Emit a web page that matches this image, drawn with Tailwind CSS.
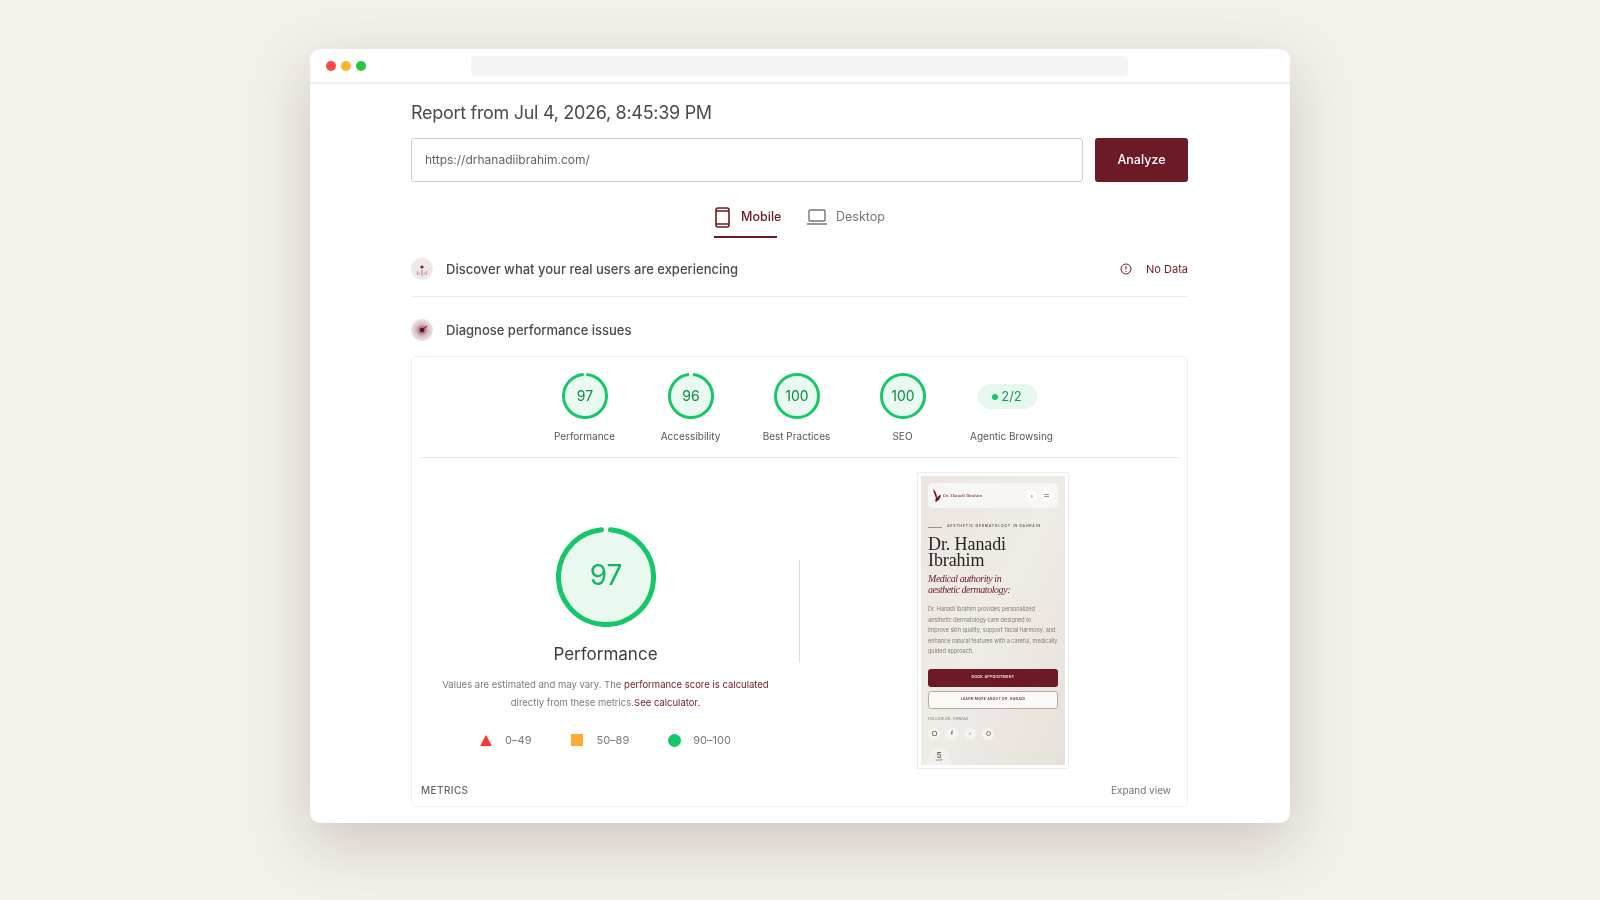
<!DOCTYPE html>
<html lang="en">
<head>
  <meta charset="UTF-8">
  <meta name="viewport" content="width=device-width, initial-scale=1.0">
  <title>PageSpeed Report</title>
  <script src="https://cdn.jsdelivr.net/npm/@tailwindcss/browser@4"></script>
</head>
<body class="bg-[#f4f0eb] font-['Inter',sans-serif] h-[900px] overflow-hidden">
  <div class="w-[980px] h-[774px] mx-auto mt-[49px] bg-white rounded-[10px] shadow-[0_20px_60px_rgba(70,55,40,0.22)] overflow-hidden blur-[0.5px]">

    <!-- Title bar -->
    <div class="h-[35px] border-b-2 border-[#f1efec] flex items-center relative">
      <div class="flex gap-[5px] ml-[16px]">
        <div class="w-[10px] h-[10px] rounded-full bg-[#fb4a45]"></div>
        <div class="w-[10px] h-[10px] rounded-full bg-[#fdb52e]"></div>
        <div class="w-[10px] h-[10px] rounded-full bg-[#27c840]"></div>
      </div>
      <div class="w-[657px] h-[20px] ml-[105px] rounded-[4px] bg-[#f4f4f3]"></div>
    </div>

    <div class="w-[777px] ml-[101px]">
      <h1 class="pt-[15px] text-[18px] leading-[28px] tracking-[-0.3px] text-[#4a4a4a]">Report from Jul 4, 2026, 8:45:39 PM</h1>

      <!-- URL form -->
      <div class="flex gap-[12px] mt-[11px]">
        <div class="w-[672px] h-[44px] border-[1.5px] border-[#cfcfcf] rounded-[3px] flex items-center pl-[13px] text-[12px] text-[#5f6368]">https://drhanadiibrahim.com/</div>
        <button class="w-[93px] h-[44px] bg-[#6b1a26] rounded-[3px] text-white text-[12.5px] font-medium">Analyze</button>
      </div>

      <!-- Device tabs -->
      <div class="flex justify-center h-[48px] mt-[8px] text-[12.5px]">
        <div class="flex items-center gap-[11px] w-[63px] whitespace-nowrap h-[48px] pt-[8px] border-b-2 border-[#6b1a26] text-[#6b1a26] font-medium pl-[1px]">
          <svg class="w-[15px] h-[21px] shrink-0" viewBox="0 0 15 21" fill="none" stroke="#6b1a26" stroke-width="1.6"><rect x="1" y="1" width="13" height="19" rx="2"/><path d="M1 4h13M1 17h13"/></svg>
          <span>Mobile</span>
        </div>
        <div class="flex items-center gap-[9px] ml-[30px] h-[48px] pt-[8px] pb-[2px] text-[#757575]">
          <svg class="w-[20px] h-[16px]" viewBox="0 0 20 16" fill="none" stroke="#757575" stroke-width="1.4"><rect x="2" y="1" width="16" height="11" rx="1"/><path d="M0 15h20" stroke-width="1.6"/></svg>
          <span>Desktop</span>
        </div>
      </div>

      <!-- Field data row -->
      <div class="flex items-center h-[22px] mt-[20px] mb-[16px]">
        <svg class="w-[22px] h-[22px]" viewBox="0 0 22 22"><circle cx="11" cy="11" r="11" fill="#eeeae8"/><circle cx="11" cy="9" r="1.6" fill="#7a1f2d"/><path d="M6.5 13v4M11 12v6M15.5 13v4" stroke="#c9a6ab" stroke-width="1.6"/><path d="M8.7 14v3M13.3 14v3" stroke="#d9c3c6" stroke-width="1.4"/></svg>
        <span class="ml-[13px] pt-[1px] text-[13px] font-medium text-[#4a4a4a]">Discover what your real users are experiencing</span>
        <svg class="w-[12px] h-[12px] ml-auto" viewBox="0 0 12 12" fill="none" stroke="#6b1a26" stroke-width="1"><circle cx="6" cy="6" r="5"/><path d="M6 3v3.5M6 8v1"/></svg>
        <span class="ml-[14px] text-[11px] text-[#6b1a26]">No Data</span>
      </div>
      <div class="h-px bg-[#ececec]"></div>

      <!-- Lab data row -->
      <div class="flex items-center h-[22px] mt-[22px]">
        <svg class="w-[22px] h-[22px]" viewBox="0 0 22 22"><defs><radialGradient id="lab"><stop offset="0" stop-color="#8a3a47"/><stop offset="0.55" stop-color="#d8bfc3"/><stop offset="1" stop-color="#ebe5e3"/></radialGradient></defs><circle cx="11" cy="11" r="11" fill="url(#lab)"/><circle cx="11" cy="11" r="2.2" fill="#5b1420"/><path d="M11 11l5-4" stroke="#5b1420"/></svg>
        <span class="ml-[13px] pt-[1px] text-[13px] font-medium text-[#4a4a4a]">Diagnose performance issues</span>
      </div>

      <!-- Report card -->
      <div class="mt-[15px] h-[451px] border border-[#f0f0f0] rounded-[5px]">
        <div class="flex justify-center pt-[16px] pb-[13px] mx-[8px] border-b border-[#e8e8e8] text-[10px] leading-[16px] text-[#555]">
          <div class="w-[106px] flex flex-col items-center">
            <svg class="w-[46px] h-[46px]" viewBox="0 0 46 46"><circle cx="23" cy="23" r="21.5" fill="#eafaf0" stroke="#14c768" stroke-width="3" pathLength="100" stroke-dasharray="98 2" transform="rotate(-86.4 23 23)"/><text x="23" y="28" text-anchor="middle" font-size="14" fill="#0a8a45">97</text></svg>
            <span class="mt-[9px]">Performance</span>
          </div>
          <div class="w-[106px] flex flex-col items-center">
            <svg class="w-[46px] h-[46px]" viewBox="0 0 46 46"><circle cx="23" cy="23" r="21.5" fill="#eafaf0" stroke="#14c768" stroke-width="3" pathLength="100" stroke-dasharray="97 3" transform="rotate(-84.6 23 23)"/><text x="23" y="28" text-anchor="middle" font-size="14" fill="#0a8a45">96</text></svg>
            <span class="mt-[9px]">Accessibility</span>
          </div>
          <div class="w-[106px] flex flex-col items-center">
            <svg class="w-[46px] h-[46px]" viewBox="0 0 46 46"><circle cx="23" cy="23" r="21.5" fill="#eafaf0" stroke="#14c768" stroke-width="3"/><text x="23" y="28" text-anchor="middle" font-size="14" fill="#0a8a45">100</text></svg>
            <span class="mt-[9px]">Best Practices</span>
          </div>
          <div class="w-[106px] flex flex-col items-center">
            <svg class="w-[46px] h-[46px]" viewBox="0 0 46 46"><circle cx="23" cy="23" r="21.5" fill="#eafaf0" stroke="#14c768" stroke-width="3"/><text x="23" y="28" text-anchor="middle" font-size="14" fill="#0a8a45">100</text></svg>
            <span class="mt-[9px]">SEO</span>
          </div>
          <div class="w-[112px] flex flex-col items-center">
            <div class="self-start ml-[22px] mt-[11px] mb-[10px] w-[59px] h-[25px] rounded-full bg-[#e6f8ed] flex items-center justify-center gap-[3px] leading-[25px] text-[13px] text-[#0e9c52]">
              <span class="w-[6px] h-[6px] rounded-full bg-[#14c768]"></span>2/2
            </div>
            <span class="mt-[9px] whitespace-nowrap">Agentic Browsing</span>
          </div>
        </div>

        <!-- Score detail -->
        <div class="flex h-[324px]">
          <div class="w-[387px] flex flex-col items-center pt-[69px]">
            <svg class="w-[100px] h-[100px]" viewBox="0 0 100 100"><circle cx="50" cy="50" r="47.5" fill="#e9f9ef" stroke="#14c768" stroke-width="5" stroke-linecap="round" pathLength="100" stroke-dasharray="97 3" transform="rotate(-84.6 50 50)"/><text x="50" y="58" text-anchor="middle" font-size="28" fill="#14b562">97</text></svg>
            <div class="mt-[13px] text-[17px] leading-[28px] text-[#3c3c3c]">Performance</div>
            <p class="mt-[8px] w-[360px] text-center text-[9.5px] leading-[18px] text-[#7a7a7a]">Values are estimated and may vary. The <span class="text-[#6b1a26]">performance score is calculated</span> directly from these metrics.<span class="text-[#6b1a26]">See calculator.</span></p>
            <div class="flex items-center mt-[18px] h-[20px] text-[11px] text-[#7a7a7a]">
              <svg class="w-[12px] h-[11px]" viewBox="0 0 12 11"><path d="M6 0l6 11H0z" fill="#ff3333"/></svg>
              <span class="ml-[13px]">0–49</span>
              <div class="w-[12px] h-[12px] bg-[#ffaa33] ml-[40px]"></div>
              <span class="ml-[13px]">50–89</span>
              <div class="w-[13px] h-[13px] rounded-full bg-[#14c768] ml-[39px]"></div>
              <span class="ml-[12px]">90–100</span>
            </div>
          </div>
          <div class="w-px h-[103px] mt-[102px] bg-[#dedede]"></div>

          <!-- Phone screenshot -->
          <div class="w-[152px] h-[297px] ml-[117px] mt-[14px] border border-[#f0eeec] p-[3px] bg-white">
            <div class="h-full bg-linear-to-br from-[#ebe6e1] via-[#efebe6] to-[#e7e1db] px-[7px] pt-[7px] overflow-hidden">
              <div class="h-[25px] rounded-[5px] bg-[#f8f6f3] flex items-center pl-[3px] pr-[6px]">
                <svg class="w-[11px] h-[15px]" viewBox="0 0 11 15"><path d="M2 1c1 4 2 7 3 9-1 2-1 3 0 4 2-1 4-3 5-7-2 0-3 1-4 3 0-3-1-7-4-9z" fill="#6b1a26"/></svg>
                <span class="ml-[1px] text-[5px] font-['Liberation_Serif',serif] text-[#6b1a26]">Dr. Hanadi Ibrahim</span>
                <span class="ml-auto w-[11px] h-[11px] rounded-full bg-white flex items-center justify-center text-[4px] text-[#555]">ع</span>
                <span class="ml-[4px] w-[11px] h-[11px] rounded-full bg-white flex items-center justify-center"><span class="w-[5px] h-[3px] border-y border-[#999]"></span></span>
              </div>
              <div class="flex items-center gap-[5px] mt-[16px] h-[6px]">
                <div class="w-[14px] h-px bg-[#9b8f88]"></div>
                <span class="text-[3.5px] font-semibold tracking-[0.78px] whitespace-nowrap text-[#6e5a56]">AESTHETIC DERMATOLOGY IN BAHRAIN</span>
              </div>
              <div class="mt-[7px] font-['Liberation_Serif',serif] text-[18px] leading-[15.5px] tracking-[-0.1px] text-[#2a2523]">Dr. Hanadi<br>Ibrahim</div>
              <div class="mt-[5px] font-['Liberation_Serif',serif] italic text-[10px] leading-[11px] font-medium tracking-[-0.45px] text-[#6b1a26]">Medical authority in<br>aesthetic dermatology:</div>
              <p class="mt-[9px] text-[5.5px] leading-[10.5px] whitespace-nowrap text-[#857a75]">Dr. Hanadi Ibrahim provides personalized<br>aesthetic dermatology care designed to<br>improve skin quality, support facial harmony, and<br>enhance natural features with a careful, medically<br>guided approach.</p>
              <div class="mt-[12px] h-[18px] rounded-[3px] bg-[#6b1a26] flex items-center justify-center text-[3.6px] font-semibold tracking-[0.3px] text-[#f3e6e6]">BOOK APPOINTMENT</div>
              <div class="mt-[4px] h-[18px] rounded-[3px] bg-[#fbfaf8] border border-[#bda7a7] flex items-center justify-center text-[3.6px] font-semibold tracking-[0.2px] text-[#6b4a4a]">LEARN MORE ABOUT DR. HANADI</div>
              <div class="mt-[7px] text-[3.4px] leading-[6px] font-medium tracking-[0.3px] text-[#85796f]">FOLLOW DR. HANADI</div>
              <div class="flex gap-[6px] mt-[6px]">
                <span class="w-[12px] h-[12px] rounded-full bg-[#f6f3f0] flex items-center justify-center"><span class="w-[5px] h-[5px] rounded-[1px] border border-[#8a7d78]"></span></span>
                <span class="w-[12px] h-[12px] rounded-full bg-[#f6f3f0] flex items-center justify-center text-[5px] font-bold text-[#5a4a48]">f</span>
                <span class="w-[12px] h-[12px] rounded-full bg-[#f6f3f0] flex items-center justify-center text-[5px] text-[#5a4a48]">♪</span>
                <span class="w-[12px] h-[12px] rounded-full bg-[#f6f3f0] flex items-center justify-center"><span class="w-[5px] h-[5px] rounded-full border border-[#8a7d78]"></span></span>
              </div>
              <div class="w-[24px] h-[24px] mt-[8px] -ml-[1px] rounded-full bg-[#f3f0ec] flex flex-col items-center pt-[3px] text-[#6b5a50]">
                <span class="text-[8px] leading-[8px] font-semibold">5</span>
                <span class="text-[2.5px] leading-[3px]">Score</span>
              </div>
            </div>
          </div>
        </div>

        <div class="flex justify-between items-center h-[16px] pl-[9px] pr-[16px] text-[10px]">
          <span class="font-medium tracking-[0.4px] text-[#666]">METRICS</span>
          <span class="text-[#757575]">Expand view</span>
        </div>
      </div>
    </div>
  </div>
</body>
</html>
